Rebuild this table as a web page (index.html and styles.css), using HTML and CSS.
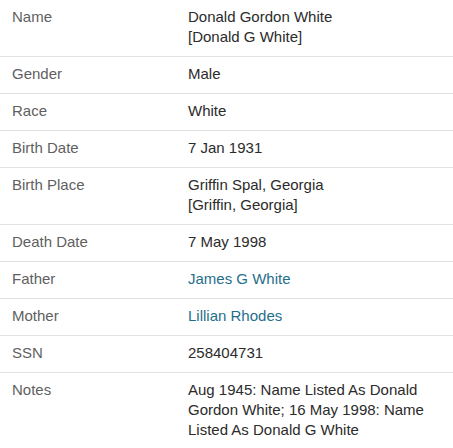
FILE: index.html
```html
<!DOCTYPE html>
<html>
<head>
<meta charset="utf-8">
<link rel="stylesheet" href="styles.css">
</head>
<body>
<dl class="facts">
  <div class="row"><dt>Name</dt><dd>Donald Gordon White<br>[Donald G White]</dd></div>
  <div class="row"><dt>Gender</dt><dd>Male</dd></div>
  <div class="row"><dt>Race</dt><dd>White</dd></div>
  <div class="row"><dt>Birth Date</dt><dd>7 Jan 1931</dd></div>
  <div class="row"><dt>Birth Place</dt><dd>Griffin Spal, Georgia<br>[Griffin, Georgia]</dd></div>
  <div class="row"><dt>Death Date</dt><dd>7 May 1998</dd></div>
  <div class="row"><dt>Father</dt><dd><a href="#">James G White</a></dd></div>
  <div class="row"><dt>Mother</dt><dd><a href="#">Lillian Rhodes</a></dd></div>
  <div class="row"><dt>SSN</dt><dd>258404731</dd></div>
  <div class="row"><dt>Notes</dt><dd>Aug 1945: Name Listed As Donald Gordon White; 16 May 1998: Name Listed As Donald G White</dd></div>
</dl>
</body>
</html>
```
FILE: styles.css
```css
html, body {
  margin: 0;
  padding: 0;
  background: #fff;
}
body {
  font-family: "Liberation Sans", Arial, sans-serif;
  font-size: 15px;
  line-height: 20px;
  color: #333;
}
.facts {
  margin: 0;
  width: 453px;
}
.row {
  display: grid;
  grid-template-columns: 176px 1fr;
  padding: 7px 0 9px 12px;
  border-bottom: 1px solid #e2e2e2;
}
dt {
  color: #5f5f5f;
}
dd {
  margin: 0;
  padding-right: 12px;
  color: #2b2b2b;
}
a {
  color: #1f6f8b;
  text-decoration: none;
}
```
